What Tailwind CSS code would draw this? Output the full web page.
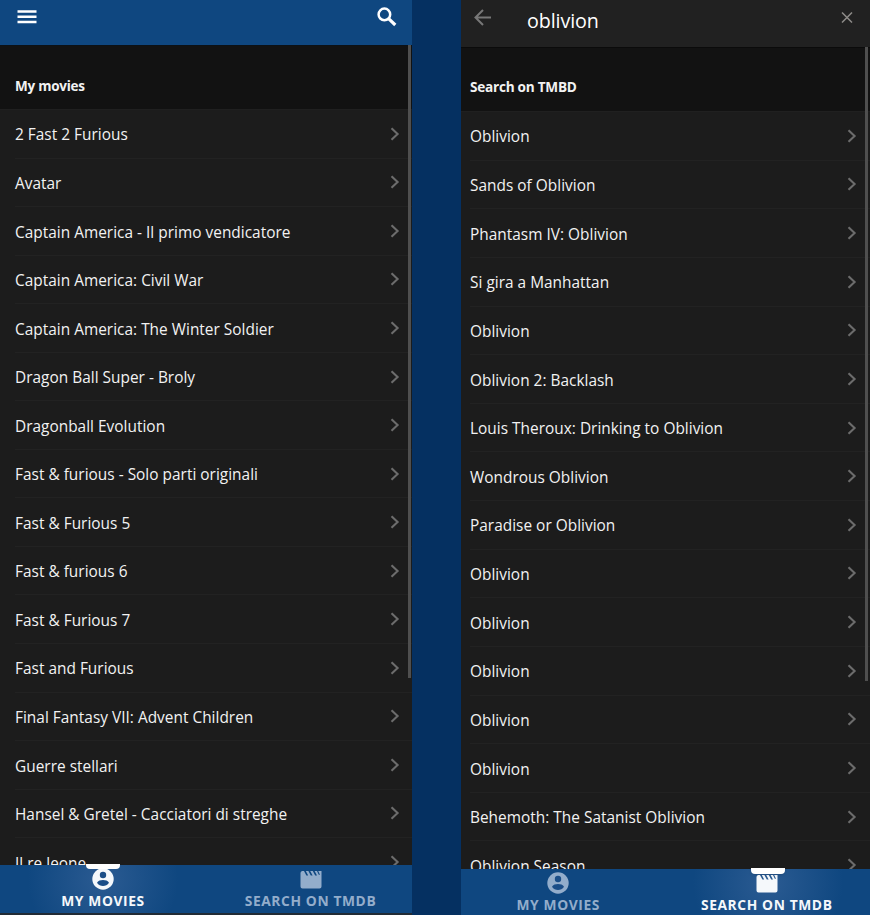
<!DOCTYPE html>
<html lang="en">
<head>
<meta charset="utf-8">
<title>My movies</title>
<script src="https://cdn.jsdelivr.net/npm/@tailwindcss/browser@4"></script>
</head>
<body class="w-[870px] h-[915px] overflow-hidden bg-[#053061] font-['Open_Sans','Noto_Sans',sans-serif] text-[#f2f2f2]">
<svg class="hidden">
  <symbol id="chev" viewBox="0 0 10 14"><path d="M1.5 1.2 7.6 7 1.5 12.8" fill="none" stroke="currentColor" stroke-width="2.1"/></symbol>
  <symbol id="user" viewBox="0 0 22 22"><circle cx="11" cy="11" r="10.7" fill="currentColor"/><circle class="fill-[#1b4e88]" cx="11" cy="7" r="3.2"/><path class="fill-[#1b4e88]" d="M5 14.8C6 12.6 8.6 12 11 12S16 12.6 17 14.8C15.6 17 13.3 18 11 18S6.4 17 5 14.8Z"/></symbol>
  <symbol id="clap" viewBox="0 0 22 18"><path d="M2.2 0H4L6.400 4.6H8.200L5.800 0H8.400L10.800 4.6H12.600L10.200 0H12.800L15.200 4.6H17L14.600 0H17L18.800 3.800H20L18.200 0H21.5V15.5Q21.5 17.5 19.5 17.5H2.5Q.5 17.5.5 15.5V2Q.5.3 2.2 0Z" fill="currentColor"/></symbol>
</svg>
<main class="flex h-full justify-between">
  <section class="relative flex flex-col w-[412px] h-[915px] bg-[#1c1c1c]">
    <header class="flex justify-between h-[45px] shrink-0 bg-[#0f4780] pl-[17px] pr-[15px] pt-[7px]">
      <svg class="w-5 h-5" viewBox="0 0 20 20"><path d="M.5 4.5H19.5M.5 9.7H19.5M.5 15H19.5" stroke="#fff" stroke-width="2.5"/></svg>
      <svg class="w-5 h-5" viewBox="0 0 20 20" fill="none" stroke="#fff"><circle cx="7.4" cy="7.4" r="5.8" stroke-width="2.5"/><path d="M11.6 11.6 18.3 18" stroke-width="3.2"/></svg>
    </header>
    <h1 class="h-[65px] shrink-0 bg-[#121212] border-t border-[#0c1116] border-b border-b-[#202020] pl-[15px] pt-[29px] text-[13.5px] leading-[22px] font-bold tracking-[-0.25px]">My movies</h1>
    <ul id="mine" class="flex-1 overflow-hidden"></ul>
    <nav class="grid grid-cols-2 h-[48px] shrink-0 bg-[#0f4780] text-[13.8px] font-bold leading-[16px]">
      <div class="relative flex flex-col items-center bg-[radial-gradient(circle_at_50%_30%,#2b5b92,#0f4780_75px)] pt-[3px] text-[#f5f8fb] tracking-[0.6px]">
        <i class="absolute left-[86px] top-[-1px] w-[34px] h-[5px] rounded-b-[4px] bg-white"></i>
        <svg class="w-[22px] h-[22px] mb-[3px]"><use href="#user"/></svg>
        <span>MY MOVIES</span>
      </div>
      <div class="flex flex-col items-center pt-[6px] pl-[3px] text-[#93adcb] tracking-[0.6px]">
        <svg class="w-[22px] h-[18px] mb-[4px]"><use href="#clap"/></svg>
        <span>SEARCH ON TMDB</span>
      </div>
    </nav>
    <div class="h-[2px] shrink-0 bg-[#222b35]"></div>
    <i class="absolute right-[1px] top-[45px] w-[3px] h-[633px] bg-[#4f4f4f]"></i>
  </section>
  <section class="relative flex flex-col w-[409px] h-[915px] bg-[#1c1c1c]">
    <header class="flex h-[47px] shrink-0 bg-[#212121] pl-[13px] pr-[17px] pt-[9px]">
      <svg class="w-[18px] h-[17px]" viewBox="0 0 18 17" fill="none" stroke="#777" stroke-width="2"><path d="M17 8.5H2M9 1 1.5 8.5 9 16"/></svg>
      <span class="ml-[35px] text-[19.7px] leading-6 tracking-[-0.1px] text-white">oblivion</span>
      <svg class="ml-auto mt-[3px] w-[12px] h-[11px]" viewBox="0 0 12 11" stroke="#8d8b88" stroke-width="1.5"><path d="M1 .5 11 10.5M11 .5 1 10.5"/></svg>
    </header>
    <h2 class="h-[65px] shrink-0 bg-[#121212] border-t border-[#0b0b0b] border-b border-b-[#202020] pl-[9px] pt-[28px] text-[13.6px] leading-[22px] font-bold tracking-[-0.25px]">Search on TMBD</h2>
    <ul id="found" class="flex-1 overflow-hidden"></ul>
    <nav class="grid grid-cols-2 h-[46px] shrink-0 bg-[#0f4780] text-[13.8px] font-bold leading-[16px]">
      <div class="flex flex-col items-center pt-[3px] pr-[10px] text-[#93adcb] tracking-[0.6px]">
        <svg class="w-[22px] h-[22px] mb-[3px]"><use href="#user"/></svg>
        <span>MY MOVIES</span>
      </div>
      <div class="relative flex flex-col items-center bg-[radial-gradient(circle_at_50%_30%,#2b5b92,#0f4780_75px)] pt-[6px] pr-[2px] text-[#f5f8fb] tracking-[0.6px]">
        <i class="absolute left-[85px] top-[-1px] w-[34px] h-[6px] rounded-b-[4px] bg-white shadow"></i>
        <svg class="w-[22px] h-[18px] mb-[4px]"><use href="#clap"/></svg>
        <span>SEARCH ON TMDB</span>
      </div>
    </nav>
    <i class="absolute right-[2px] top-[47px] w-[3px] h-[634px] bg-[#4f4f4f]"></i>
  </section>
</main>
<script>
const mine = ["2 Fast 2 Furious","Avatar","Captain America - Il primo vendicatore","Captain America: Civil War","Captain America: The Winter Soldier","Dragon Ball Super - Broly","Dragonball Evolution","Fast & furious - Solo parti originali","Fast & Furious 5","Fast & furious 6","Fast & Furious 7","Fast and Furious","Final Fantasy VII: Advent Children","Guerre stellari","Hansel & Gretel - Cacciatori di streghe","Il re leone"];
const found = ["Oblivion","Sands of Oblivion","Phantasm IV: Oblivion","Si gira a Manhattan","Oblivion","Oblivion 2: Backlash","Louis Theroux: Drinking to Oblivion","Wondrous Oblivion","Paradise or Oblivion","Oblivion","Oblivion","Oblivion","Oblivion","Oblivion","Behemoth: The Satanist Oblivion","Oblivion Season"];
const row = (pad, inner) => t => `<li class="${pad}"><div class="${inner}"><span class="pt-[2.4px]">${t.replace("&", "&amp;")}</span><svg class="w-[10px] h-[14px] text-[#6c6c6c]"><use href="#chev"/></svg></div></li>`;
document.getElementById("mine").innerHTML = mine.map(row("pl-[15px]", "flex items-center justify-between h-[48.56px] border-b border-[#222] pr-[12px] text-[15.4px] tracking-[0.02px]")).join("");
document.getElementById("found").innerHTML = found.map(row("pl-[9px]", "flex items-center justify-between h-[48.64px] border-b border-[#222] pr-[13px] text-[15.4px] tracking-[0.02px]")).join("");
</script>
</body>
</html>
